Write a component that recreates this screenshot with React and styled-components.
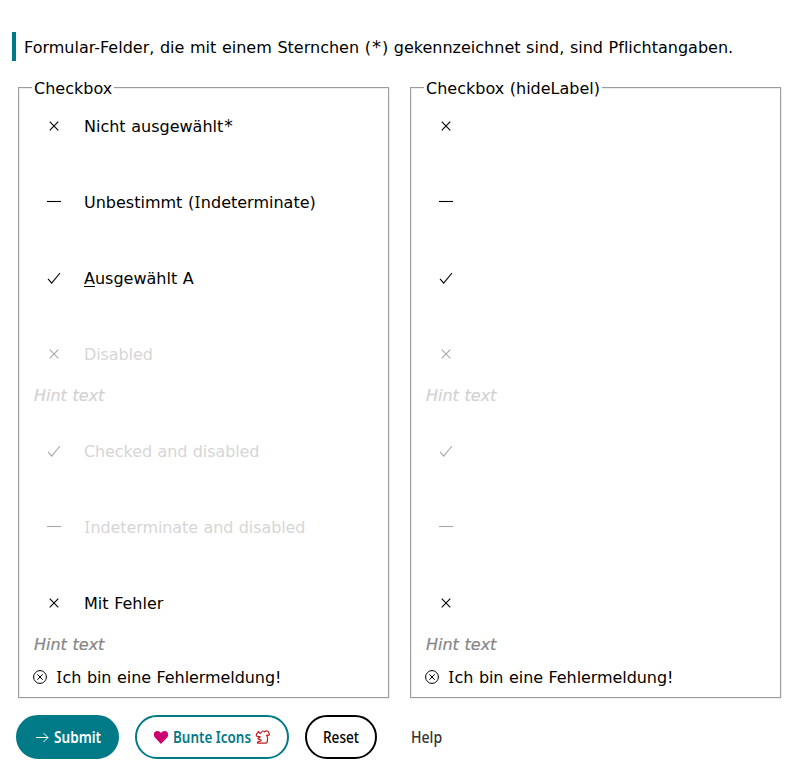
import React from "react";
import styled, { createGlobalStyle } from "styled-components";

const GlobalStyle = createGlobalStyle`
  * { box-sizing: border-box; }
  body { margin: 0; background: #fff; color: #000; }
`;

const Form = styled.form`
  width: 800px;
  height: 775px;
  padding-top: 32px;
  overflow: hidden;
  font-family: Verdana, "DejaVu Sans", sans-serif;
  font-size: 16px;
  line-height: 20px;
  word-spacing: 0.54px;
  font-variant-ligatures: none;
`;

const Notice = styled.p`
  margin: 0 12px;
  height: 29px;
  padding-left: 8px;
  border-left: 4px solid #007a87;
  line-height: 32px;
  white-space: nowrap;
`;

const Columns = styled.div`
  display: grid;
  grid-template-columns: 371px 371px;
  gap: 21px;
  margin: 17px 0 0 18px;
`;

const Fieldset = styled.fieldset`
  margin: 0;
  height: 620px;
  padding: 12px 15px 0;
  border: 1px solid #9c9c9c;
  box-shadow: 1px 1px 0 #eee, inset 1px 1px 0 #eee;
`;

const Legend = styled.legend`
  height: 19px;
  padding: 0 2px;
  margin-left: -2px;
  background: #fff;
  line-height: 22px;
`;

const Field = styled.div`
  height: ${(p) => p.$height || 76}px;
  color: ${(p) => (p.$disabled ? "#d6d6d6" : "#000")};
`;

const Choice = styled.label`
  display: flex;
  align-items: center;
  height: 36px;
  white-space: nowrap;
  letter-spacing: ${(p) => (p.$disabled ? "-0.1px" : "normal")};
`;

const Mark = styled.svg`
  flex: none;
  width: 16px;
  height: 16px;
  margin: -2px 22px 0 12px;
  fill: none;
  stroke: ${(p) => (p.$disabled ? "#a6a6a6" : "#000")};
  stroke-width: 1.1;
`;

const Hint = styled.div`
  height: 20px;
  margin-top: 13px;
  font-style: italic;
  color: ${(p) => (p.$disabled ? "#d2d2d2" : "#868686")};
  -webkit-text-stroke: 0.2px;
`;

const ErrorMessage = styled.div`
  display: flex;
  align-items: center;
  gap: 9px;
  height: 20px;
  margin: 13px 0 0 -1px;
  letter-spacing: -0.07px;
`;

const ErrorIcon = styled.svg`
  width: 14px;
  height: 14px;
  margin-top: -3px;
  fill: none;
  stroke: #000;
`;

const Star = styled.span`
  margin: 0 1px;
  font-size: ${(p) => (p.$inline ? 18 : 17)}px;
  line-height: 0;
`;

const SerifI = styled.span`
  margin: 0 0.6px;
  font-family: "Noto Sans", sans-serif;
  line-height: 1;
`;

const Access = styled.u`
  text-underline-offset: 2px;
  text-decoration-thickness: 1px;
`;

const Actions = styled.div`
  display: flex;
  gap: 16px;
  margin: 17px 0 0 16px;
`;

const Button = styled.button`
  display: flex;
  align-items: center;
  width: ${(p) => p.$width}px;
  height: 44px;
  padding: 0 0 0 16px;
  border: 2px solid ${(p) => p.$border};
  border-radius: 22px;
  background: ${(p) => p.$fill || "transparent"};
  color: ${(p) => p.$color};
  font-family: "Noto Sans", sans-serif;
  font-size: 16px;
  font-weight: ${(p) => p.$weight || 600};
  line-height: 22px;
  white-space: nowrap;
`;

const Caption = styled.span`
  flex: none;
  width: ${(p) => p.$width}px;
  transform: scaleX(${(p) => p.$scale || 0.85});
  transform-origin: left;
`;

const ButtonIcon = styled.svg`
  flex: none;
  width: 16px;
  height: 16px;
  margin-right: ${(p) => p.$gap || 0}px;
  fill: none;
`;

const marks = {
  cross: "M3.7 3.7l8.6 8.6M12.3 3.7l-8.6 8.6",
  dash: "M1 7.5h14",
  check: "M2 8.9l3.7 4.2L14 3",
};

const fields = [
  { mark: "cross", label: <>Nicht ausgewählt<Star>*</Star></> },
  { mark: "dash", label: <>Unbestimmt (<SerifI>I</SerifI>ndeterminate)</> },
  { mark: "check", label: <><Access>A</Access>usgewählt A</> },
  { mark: "cross", label: "Disabled", disabled: true, hint: true, height: 97 },
  { mark: "check", label: "Checked and disabled", disabled: true },
  { mark: "dash", label: <><SerifI>I</SerifI>ndeterminate and disabled</>, disabled: true },
  { mark: "cross", label: "Mit Fehler", hint: true, error: true, height: 104 },
];

function CheckboxGroup({ title, hideLabel }) {
  return (
    <Fieldset>
      <Legend>{title}</Legend>
      {fields.map((f, i) => (
        <Field key={i} $height={f.height} $disabled={f.disabled}>
          <Choice $disabled={f.disabled}>
            <Mark viewBox="0 0 16 16" $disabled={f.disabled}><path d={marks[f.mark]} /></Mark>
            {!hideLabel && <span>{f.label}</span>}
          </Choice>
          {f.hint && <Hint $disabled={f.disabled}>Hint text</Hint>}
          {f.error && (
            <ErrorMessage>
              <ErrorIcon viewBox="0 0 14 14">
                <circle cx="7" cy="7" r="6.4" />
                <path d="M4.3 4.3l5.4 5.4M9.7 4.3l-5.4 5.4" />
              </ErrorIcon>
              <span><SerifI>I</SerifI>ch bin eine Fehlermeldung!</span>
            </ErrorMessage>
          )}
        </Field>
      ))}
    </Fieldset>
  );
}

export default function App() {
  return (
    <Form>
      <GlobalStyle />
      <Notice>
        Formular-Felder, die mit einem Sternchen (<Star $inline>*</Star>) gekennzeichnet sind, sind Pflichtangaben.
      </Notice>
      <Columns>
        <CheckboxGroup title="Checkbox" />
        <CheckboxGroup title="Checkbox (hideLabel)" hideLabel />
      </Columns>
      <Actions>
        <Button type="button" $width={103} $border="#007a87" $fill="#007a87" $color="#fff">
          <ButtonIcon viewBox="0 0 16 16" $gap={4} stroke="currentColor">
            <path d="M2 8.5h12M9.500 4l4.500 4.500L9.500 13" />
          </ButtonIcon>
          <Caption $width={49}>Submit</Caption>
        </Button>
        <Button type="button" $width={154} $border="#007a87" $color="#007a87">
          <ButtonIcon viewBox="0 0 16 16" $gap={4}>
            <path fill="#cc006e" d="M8 15L1.900 8.500C-.4 5.700 1.200 2 4.400 2 6.200 2 7.400 3 8 4.200 8.600 3 9.800 2 11.600 2c3.200 0 4.800 3.700 2.500 6.500z" />
          </ButtonIcon>
          <Caption $width={82} $scale={0.84}>Bunte Icons</Caption>
          <ButtonIcon viewBox="0 0 16 16" stroke="#c41e24" strokeWidth="1.2" strokeLinejoin="round">
            <path d="M1.200 6.200C1.300 4.800 2.200 3.900 3.200 3.700L3.300 2.400 5 4.300C6.300 4.600 6.400 2 8 2c.8 0 1.300.3 1.700.8C10.300 2 11.200 1.700 12.300 2c1 .3 1.300 1 1.200 1.700 1.200.5 1.200 2.400-.2 2.700-.7.2-1.300-.2-1.700-.2.2 1.300 1.300 2 .9 3.700-.1 1.700.2 4.300-1.700 4.300H2.500c-.3-1.300.7-2 2.500-1.900L6.200 11 3 9.900l.2-1.100L5 8.400V7.500L1.900 7.300z" />
          </ButtonIcon>
        </Button>
        <Button type="button" $width={72} $border="#000" $color="#000" $weight={500}>
          <Caption $width={36}>Reset</Caption>
        </Button>
        <Button type="button" $width={72} $border="transparent" $color="#333" $weight={500}>
          <Caption $width={31} $scale={0.88}>Help</Caption>
        </Button>
      </Actions>
    </Form>
  );
}
